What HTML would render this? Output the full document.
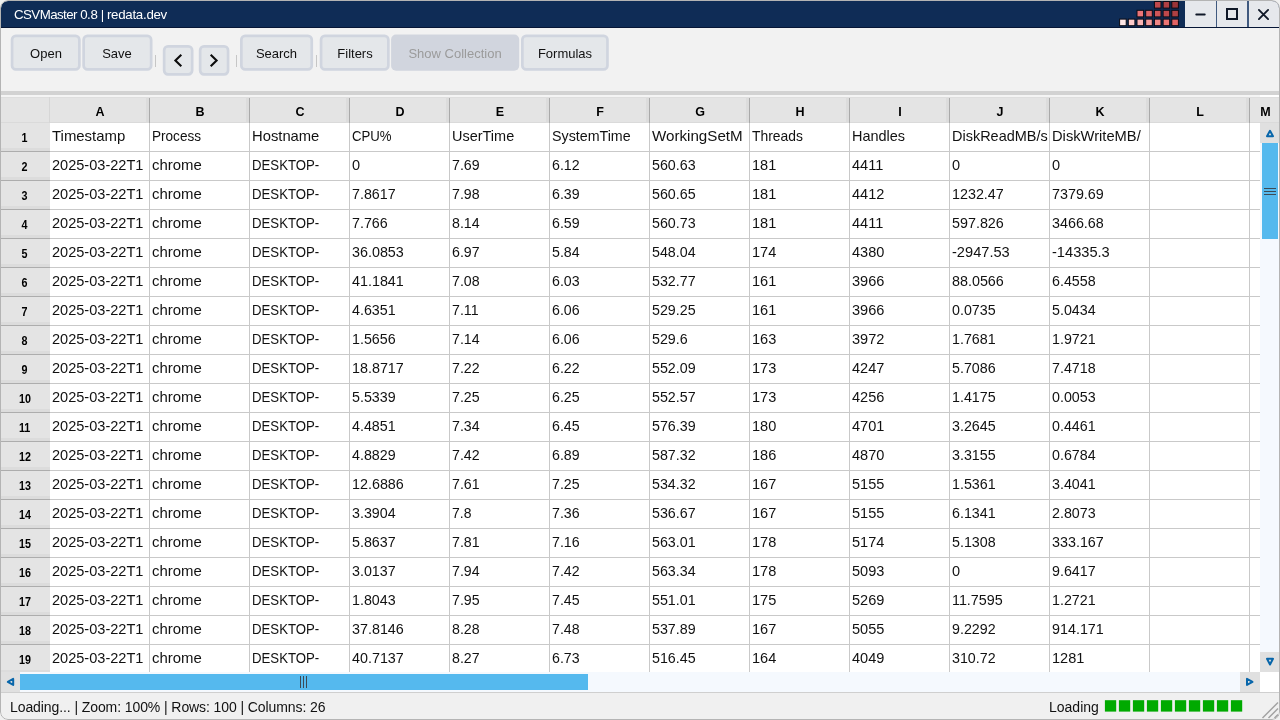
<!DOCTYPE html>
<html lang="en"><head><meta charset="utf-8"><title>CSVMaster 0.8 | redata.dev</title>
<style>
*{box-sizing:border-box;margin:0;padding:0}
html,body{width:1280px;height:720px;overflow:hidden;background:#f0f0f0}
body{font-family:"Liberation Sans",sans-serif;color:#111;position:relative}
#win{will-change:transform;position:absolute;left:0;top:0;width:1280px;height:720px;border-radius:8px;background:#f2f2f2;overflow:hidden}
#frame{position:absolute;left:0;top:0;width:1280px;height:720px;border:1px solid #b4b4b4;border-radius:8px;pointer-events:none;z-index:50}
#title{position:absolute;left:1px;top:1px;width:1278px;height:27px;background:#0f2c56;border-bottom:1px solid #061636;border-radius:7px 7px 0 0;overflow:hidden}
#title .t{position:absolute;left:13px;top:5px;font-size:13.3px;line-height:17px;color:#fff;letter-spacing:-0.42px;white-space:nowrap}
#logo{position:absolute;left:1118px;top:0px}
.wb{position:absolute;top:0;height:26px;background:#e6e8ec}
#toolbar{position:absolute;left:1px;top:28px;width:1278px;height:63px;background:#f2f2f2}
.btn{position:absolute;top:35px;height:36px;font-size:13px;line-height:37px;text-align:center;color:#111;white-space:nowrap}
.btn.dis{color:#9b9b9b}
.sep{position:absolute;top:55px;width:1px;height:12px;background:#c6c6c6}
#band1{position:absolute;left:1px;top:91px;width:1278px;height:4px;background:#d2d2d2}
#band2{position:absolute;left:1px;top:95px;width:1278px;height:2px;background:#f4f4f4}
#grid{position:absolute;left:0;top:0;width:1260px;height:672px;overflow:hidden}
#hdr{position:absolute;left:1px;top:97px;width:1279px;height:26px;background:#e4e4e4;border-bottom:1px solid #dadada;border-top:1px solid #dedede}
#hdr .corner{position:absolute;left:0;top:-1px;width:49px;height:26px;border-right:1px solid #d6d6d6}
.ch{position:absolute;top:-1px;width:100px;height:25px;font-weight:bold;font-size:12.5px;line-height:31px;text-align:center;margin-left:-1px;color:#000}
.ch::after{content:"";position:absolute;right:0;top:1px;width:4px;height:25px;background:linear-gradient(90deg,#dcdcdc 0,#dcdcdc 3px,#a9a9a9 3px)}
.ch.last{width:31px}
.ch.last::after{display:none}
.row{position:absolute;left:0;width:1280px;height:29px}
.rh{position:absolute;left:1px;top:0;width:49px;height:29px;background:#e4e4e4;font-weight:bold;font-size:12.5px;text-align:center;line-height:29px;color:#000}
.rh::after{content:"";position:absolute;left:0;bottom:0;width:49px;height:4px;background:linear-gradient(180deg,#dcdcdc 0,#dcdcdc 3px,#adadad 3px)}
.rh span{position:relative;top:1px;left:-1px;display:inline-block;transform:scaleX(.86)}
.c{position:absolute;top:0;width:100px;height:29px;background:#fff;border-right:1px solid #c9c9c9;border-bottom:1px solid #c9c9c9;font-size:15px;line-height:26px;padding-left:2px;white-space:nowrap;overflow:hidden;color:#111}
#vsb{position:absolute;left:1260px;top:123px;width:19px;height:549px;background:#f5f9fe}
.sbb{position:absolute;background:#e0e0e0}
#vthumb{position:absolute;left:2px;top:20px;width:16px;height:96px;background:#55b9ee}
#hsb{position:absolute;left:1px;top:672px;width:1259px;height:20px;background:#f5f9fe}
#hthumb{position:absolute;left:19px;top:2px;width:568px;height:16px;background:#55b9ee}
#sline{position:absolute;left:1px;top:692px;width:1278px;height:1px;background:#cfcfcf}
#status{position:absolute;left:1px;top:693px;width:1278px;height:26px;background:#f0f0f0;font-size:14px;color:#111}
#status .l{position:absolute;left:9px;top:5px;line-height:18px;letter-spacing:-0.09px;white-space:nowrap}
#status .r{position:absolute;left:1048px;top:5px;line-height:18px;white-space:nowrap}
.pb{position:absolute;top:7px;width:12px;height:12px;background:#00aa00}
svg{position:absolute;display:block;overflow:visible}
.s{display:inline-block;transform-origin:0 50%;white-space:nowrap}
.wd{position:absolute;top:0;width:3px;height:26px;background:linear-gradient(90deg,#e6e8ec 0,#e6e8ec 0.6px,#40597f 0.8px,#40597f 2.1px,#e6e8ec 2.3px)}
.wd.w2{background:linear-gradient(90deg,#40597f 0,#40597f 1.5px,#e6e8ec 1.7px)}
.k1010{transform:translateY(-0.35px) scaleX(1.01)}
.k880{transform:translateY(-0.35px) scaleX(0.88)}
.k905{transform:translateY(-0.35px) scaleX(0.905)}
.k925{transform:translateY(-0.35px) scaleX(0.925)}
.k930{transform:translateY(-0.35px) scaleX(0.93)}
.k945{transform:translateY(-0.35px) scaleX(0.945)}
.k950{transform:translateY(-0.35px) scaleX(0.95)}
.k955{transform:translateY(-0.35px) scaleX(0.955)}
.k965{transform:translateY(-0.35px) scaleX(0.965)}
.k970{transform:translateY(-0.35px) scaleX(0.97)}
.k975{transform:translateY(-0.35px) scaleX(0.975)}
.k980{transform:translateY(-0.35px) scaleX(0.98)}
.k985{transform:translateY(-0.35px) scaleX(0.985)}
.k995{transform:translateY(-0.35px) scaleX(0.995)}
</style></head>
<body>
<div id="win">
<div id="title"><div class="t"><span style="letter-spacing:-0.57px">CSVMaster</span> 0.8 | <span style="letter-spacing:-0.28px">redata.dev</span></div>
<svg id="logo" width="66" height="27" viewBox="0 0 66 27">
<g>
<rect x="35.4" y="0.5" width="6.6" height="6.6" fill="#c0484c" stroke="#0a0a14" stroke-width="1"/>
<rect x="44.1" y="0.5" width="6.6" height="6.6" fill="#b04044" stroke="#0a0a14" stroke-width="1"/>
<rect x="52.8" y="0.5" width="6.6" height="6.6" fill="#9a3438" stroke="#0a0a14" stroke-width="1"/>
<rect x="18.0" y="9.3" width="6.6" height="6.6" fill="#ec7578" stroke="#0a0a14" stroke-width="1"/>
<rect x="26.7" y="9.3" width="6.6" height="6.6" fill="#dd6366" stroke="#0a0a14" stroke-width="1"/>
<rect x="35.4" y="9.3" width="6.6" height="6.6" fill="#cf5558" stroke="#0a0a14" stroke-width="1"/>
<rect x="44.1" y="9.3" width="6.6" height="6.6" fill="#bd484b" stroke="#0a0a14" stroke-width="1"/>
<rect x="52.8" y="9.3" width="6.6" height="6.6" fill="#ae4043" stroke="#0a0a14" stroke-width="1"/>
<rect x="0.6" y="18.1" width="6.6" height="6.6" fill="#fde6e6" stroke="#0a0a14" stroke-width="1"/>
<rect x="9.3" y="18.1" width="6.6" height="6.6" fill="#fccaca" stroke="#0a0a14" stroke-width="1"/>
<rect x="18.0" y="18.1" width="6.6" height="6.6" fill="#f9b4b4" stroke="#0a0a14" stroke-width="1"/>
<rect x="26.7" y="18.1" width="6.6" height="6.6" fill="#f69c9c" stroke="#0a0a14" stroke-width="1"/>
<rect x="35.4" y="18.1" width="6.6" height="6.6" fill="#f08686" stroke="#0a0a14" stroke-width="1"/>
<rect x="44.1" y="18.1" width="6.6" height="6.6" fill="#ec7474" stroke="#0a0a14" stroke-width="1"/>
<rect x="52.8" y="18.1" width="6.6" height="6.6" fill="#e26365" stroke="#0a0a14" stroke-width="1"/>
</g>
</svg>
<div class="wb" style="left:1184px;width:95px"></div>
<div class="wd" style="left:1214px"></div>
<div class="wd w2" style="left:1246px"></div>
<svg style="left:1184px;top:0" width="95" height="26" viewBox="0 0 95 26">
<line x1="11.3" y1="13.5" x2="19.7" y2="13.5" stroke="#101828" stroke-width="2" stroke-linecap="round"/>
<rect x="42" y="8" width="10" height="10" fill="none" stroke="#101828" stroke-width="2"/>
<path d="M73.9 8.9 L83.1 18.1 M83.1 8.9 L73.9 18.1" stroke="#101828" stroke-width="1.9" stroke-linecap="round" fill="none"/>
</svg>
</div>
<div id="toolbar"></div>
<svg style="left:0;top:28px" width="640" height="63" viewBox="0 28 640 63">
<rect x="12.05" y="35.95" width="67.30" height="33.50" rx="3.8" fill="#e4e7ea" stroke="#d0d5df" stroke-width="2.7"/>
<rect x="83.65" y="35.95" width="67.50" height="33.50" rx="3.8" fill="#e4e7ea" stroke="#d0d5df" stroke-width="2.7"/>
<rect x="164.15" y="46.45" width="28.00" height="27.90" rx="3.8" fill="#e4e7ea" stroke="#d0d5df" stroke-width="2.7"/>
<rect x="200.15" y="46.45" width="27.90" height="27.90" rx="3.8" fill="#e4e7ea" stroke="#d0d5df" stroke-width="2.7"/>
<rect x="241.35" y="35.95" width="70.40" height="33.50" rx="3.8" fill="#e4e7ea" stroke="#d0d5df" stroke-width="2.7"/>
<rect x="321.05" y="35.95" width="67.30" height="33.50" rx="3.8" fill="#e4e7ea" stroke="#d0d5df" stroke-width="2.7"/>
<rect x="391.10" y="34.60" width="128.10" height="36.20" rx="5" fill="#d1d5de"/>
<rect x="522.35" y="35.95" width="85.10" height="33.50" rx="3.8" fill="#e4e7ea" stroke="#d0d5df" stroke-width="2.7"/>
</svg>
<div class="btn" style="left:11px;width:70px">Open</div>
<div class="btn" style="left:82px;width:70px">Save</div>
<div class="sep" style="left:155px"></div>
<svg style="left:160px;top:42px" width="72" height="36" viewBox="160 42 72 36"><path d="M181.3 54.7 L175.4 60.5 L181.3 66.3 M210.7 54.7 L216.6 60.5 L210.7 66.3" fill="none" stroke="#0c0c0c" stroke-width="2.1" stroke-linecap="butt" stroke-linejoin="miter"/></svg>
<div class="sep" style="left:236px"></div>
<div class="btn" style="left:240px;width:73px">Search</div>
<div class="sep" style="left:316px"></div>
<div class="btn" style="left:320px;width:70px">Filters</div>
<div class="btn dis" style="left:391px;width:128px">Show Collection</div>
<div class="btn" style="left:521px;width:88px">Formulas</div>
<div id="band1"></div><div id="band2"></div>
<div id="hdr"><div class="corner"></div><div class="ch" style="left:50px">A</div><div class="ch" style="left:150px">B</div><div class="ch" style="left:250px">C</div><div class="ch" style="left:350px">D</div><div class="ch" style="left:450px">E</div><div class="ch" style="left:550px">F</div><div class="ch" style="left:650px">G</div><div class="ch" style="left:750px">H</div><div class="ch" style="left:850px">I</div><div class="ch" style="left:950px">J</div><div class="ch" style="left:1050px">K</div><div class="ch" style="left:1150px">L</div><div class="ch last" style="left:1250px">M</div></div>
<div id="grid">
<div class="row" style="top:123px"><div class="rh"><span>1</span></div><div class="c" style="left:50px"><span class="s k995">Timestamp</span></div><div class="c" style="left:150px"><span class="s k905">Process</span></div><div class="c" style="left:250px"><span class="s k985">Hostname</span></div><div class="c" style="left:350px"><span class="s k880">CPU%</span></div><div class="c" style="left:450px"><span class="s k965">UserTime</span></div><div class="c" style="left:550px"><span class="s k950">SystemTime</span></div><div class="c" style="left:650px"><span class="s k1010">WorkingSetM</span></div><div class="c" style="left:750px"><span class="s k925">Threads</span></div><div class="c" style="left:850px"><span class="s k965">Handles</span></div><div class="c" style="left:950px"><span class="s k965">DiskReadMB/s</span></div><div class="c" style="left:1050px"><span class="s k980">DiskWriteMB/</span></div><div class="c" style="left:1150px"></div><div class="c" style="left:1250px"></div></div>
<div class="row" style="top:152px"><div class="rh"><span>2</span></div><div class="c" style="left:50px"><span class="s k970">2025-03-22T1</span></div><div class="c" style="left:150px"><span class="s k995">chrome</span></div><div class="c" style="left:250px"><span class="s k880">DESKTOP-</span></div><div class="c" style="left:350px"><span class="s k970">0</span></div><div class="c" style="left:450px"><span class="s k945">7.69</span></div><div class="c" style="left:550px"><span class="s k945">6.12</span></div><div class="c" style="left:650px"><span class="s k950">560.63</span></div><div class="c" style="left:750px"><span class="s k970">181</span></div><div class="c" style="left:850px"><span class="s k970">4411</span></div><div class="c" style="left:950px"><span class="s k970">0</span></div><div class="c" style="left:1050px"><span class="s k970">0</span></div><div class="c" style="left:1150px"></div><div class="c" style="left:1250px"></div></div>
<div class="row" style="top:181px"><div class="rh"><span>3</span></div><div class="c" style="left:50px"><span class="s k970">2025-03-22T1</span></div><div class="c" style="left:150px"><span class="s k995">chrome</span></div><div class="c" style="left:250px"><span class="s k880">DESKTOP-</span></div><div class="c" style="left:350px"><span class="s k950">7.8617</span></div><div class="c" style="left:450px"><span class="s k945">7.98</span></div><div class="c" style="left:550px"><span class="s k945">6.39</span></div><div class="c" style="left:650px"><span class="s k950">560.65</span></div><div class="c" style="left:750px"><span class="s k970">181</span></div><div class="c" style="left:850px"><span class="s k970">4412</span></div><div class="c" style="left:950px"><span class="s k955">1232.47</span></div><div class="c" style="left:1050px"><span class="s k955">7379.69</span></div><div class="c" style="left:1150px"></div><div class="c" style="left:1250px"></div></div>
<div class="row" style="top:210px"><div class="rh"><span>4</span></div><div class="c" style="left:50px"><span class="s k970">2025-03-22T1</span></div><div class="c" style="left:150px"><span class="s k995">chrome</span></div><div class="c" style="left:250px"><span class="s k880">DESKTOP-</span></div><div class="c" style="left:350px"><span class="s k950">7.766</span></div><div class="c" style="left:450px"><span class="s k945">8.14</span></div><div class="c" style="left:550px"><span class="s k945">6.59</span></div><div class="c" style="left:650px"><span class="s k950">560.73</span></div><div class="c" style="left:750px"><span class="s k970">181</span></div><div class="c" style="left:850px"><span class="s k970">4411</span></div><div class="c" style="left:950px"><span class="s k955">597.826</span></div><div class="c" style="left:1050px"><span class="s k955">3466.68</span></div><div class="c" style="left:1150px"></div><div class="c" style="left:1250px"></div></div>
<div class="row" style="top:239px"><div class="rh"><span>5</span></div><div class="c" style="left:50px"><span class="s k970">2025-03-22T1</span></div><div class="c" style="left:150px"><span class="s k995">chrome</span></div><div class="c" style="left:250px"><span class="s k880">DESKTOP-</span></div><div class="c" style="left:350px"><span class="s k955">36.0853</span></div><div class="c" style="left:450px"><span class="s k945">6.97</span></div><div class="c" style="left:550px"><span class="s k945">5.84</span></div><div class="c" style="left:650px"><span class="s k950">548.04</span></div><div class="c" style="left:750px"><span class="s k970">174</span></div><div class="c" style="left:850px"><span class="s k970">4380</span></div><div class="c" style="left:950px"><span class="s k975">-2947.53</span></div><div class="c" style="left:1050px"><span class="s k975">-14335.3</span></div><div class="c" style="left:1150px"></div><div class="c" style="left:1250px"></div></div>
<div class="row" style="top:268px"><div class="rh"><span>6</span></div><div class="c" style="left:50px"><span class="s k970">2025-03-22T1</span></div><div class="c" style="left:150px"><span class="s k995">chrome</span></div><div class="c" style="left:250px"><span class="s k880">DESKTOP-</span></div><div class="c" style="left:350px"><span class="s k955">41.1841</span></div><div class="c" style="left:450px"><span class="s k945">7.08</span></div><div class="c" style="left:550px"><span class="s k945">6.03</span></div><div class="c" style="left:650px"><span class="s k950">532.77</span></div><div class="c" style="left:750px"><span class="s k970">161</span></div><div class="c" style="left:850px"><span class="s k970">3966</span></div><div class="c" style="left:950px"><span class="s k955">88.0566</span></div><div class="c" style="left:1050px"><span class="s k950">6.4558</span></div><div class="c" style="left:1150px"></div><div class="c" style="left:1250px"></div></div>
<div class="row" style="top:297px"><div class="rh"><span>7</span></div><div class="c" style="left:50px"><span class="s k970">2025-03-22T1</span></div><div class="c" style="left:150px"><span class="s k995">chrome</span></div><div class="c" style="left:250px"><span class="s k880">DESKTOP-</span></div><div class="c" style="left:350px"><span class="s k950">4.6351</span></div><div class="c" style="left:450px"><span class="s k945">7.11</span></div><div class="c" style="left:550px"><span class="s k945">6.06</span></div><div class="c" style="left:650px"><span class="s k950">529.25</span></div><div class="c" style="left:750px"><span class="s k970">161</span></div><div class="c" style="left:850px"><span class="s k970">3966</span></div><div class="c" style="left:950px"><span class="s k950">0.0735</span></div><div class="c" style="left:1050px"><span class="s k950">5.0434</span></div><div class="c" style="left:1150px"></div><div class="c" style="left:1250px"></div></div>
<div class="row" style="top:326px"><div class="rh"><span>8</span></div><div class="c" style="left:50px"><span class="s k970">2025-03-22T1</span></div><div class="c" style="left:150px"><span class="s k995">chrome</span></div><div class="c" style="left:250px"><span class="s k880">DESKTOP-</span></div><div class="c" style="left:350px"><span class="s k950">1.5656</span></div><div class="c" style="left:450px"><span class="s k945">7.14</span></div><div class="c" style="left:550px"><span class="s k945">6.06</span></div><div class="c" style="left:650px"><span class="s k950">529.6</span></div><div class="c" style="left:750px"><span class="s k970">163</span></div><div class="c" style="left:850px"><span class="s k970">3972</span></div><div class="c" style="left:950px"><span class="s k950">1.7681</span></div><div class="c" style="left:1050px"><span class="s k950">1.9721</span></div><div class="c" style="left:1150px"></div><div class="c" style="left:1250px"></div></div>
<div class="row" style="top:355px"><div class="rh"><span>9</span></div><div class="c" style="left:50px"><span class="s k970">2025-03-22T1</span></div><div class="c" style="left:150px"><span class="s k995">chrome</span></div><div class="c" style="left:250px"><span class="s k880">DESKTOP-</span></div><div class="c" style="left:350px"><span class="s k955">18.8717</span></div><div class="c" style="left:450px"><span class="s k945">7.22</span></div><div class="c" style="left:550px"><span class="s k945">6.22</span></div><div class="c" style="left:650px"><span class="s k950">552.09</span></div><div class="c" style="left:750px"><span class="s k970">173</span></div><div class="c" style="left:850px"><span class="s k970">4247</span></div><div class="c" style="left:950px"><span class="s k950">5.7086</span></div><div class="c" style="left:1050px"><span class="s k950">7.4718</span></div><div class="c" style="left:1150px"></div><div class="c" style="left:1250px"></div></div>
<div class="row" style="top:384px"><div class="rh"><span>10</span></div><div class="c" style="left:50px"><span class="s k970">2025-03-22T1</span></div><div class="c" style="left:150px"><span class="s k995">chrome</span></div><div class="c" style="left:250px"><span class="s k880">DESKTOP-</span></div><div class="c" style="left:350px"><span class="s k950">5.5339</span></div><div class="c" style="left:450px"><span class="s k945">7.25</span></div><div class="c" style="left:550px"><span class="s k945">6.25</span></div><div class="c" style="left:650px"><span class="s k950">552.57</span></div><div class="c" style="left:750px"><span class="s k970">173</span></div><div class="c" style="left:850px"><span class="s k970">4256</span></div><div class="c" style="left:950px"><span class="s k950">1.4175</span></div><div class="c" style="left:1050px"><span class="s k950">0.0053</span></div><div class="c" style="left:1150px"></div><div class="c" style="left:1250px"></div></div>
<div class="row" style="top:413px"><div class="rh"><span>11</span></div><div class="c" style="left:50px"><span class="s k970">2025-03-22T1</span></div><div class="c" style="left:150px"><span class="s k995">chrome</span></div><div class="c" style="left:250px"><span class="s k880">DESKTOP-</span></div><div class="c" style="left:350px"><span class="s k950">4.4851</span></div><div class="c" style="left:450px"><span class="s k945">7.34</span></div><div class="c" style="left:550px"><span class="s k945">6.45</span></div><div class="c" style="left:650px"><span class="s k950">576.39</span></div><div class="c" style="left:750px"><span class="s k970">180</span></div><div class="c" style="left:850px"><span class="s k970">4701</span></div><div class="c" style="left:950px"><span class="s k950">3.2645</span></div><div class="c" style="left:1050px"><span class="s k950">0.4461</span></div><div class="c" style="left:1150px"></div><div class="c" style="left:1250px"></div></div>
<div class="row" style="top:442px"><div class="rh"><span>12</span></div><div class="c" style="left:50px"><span class="s k970">2025-03-22T1</span></div><div class="c" style="left:150px"><span class="s k995">chrome</span></div><div class="c" style="left:250px"><span class="s k880">DESKTOP-</span></div><div class="c" style="left:350px"><span class="s k950">4.8829</span></div><div class="c" style="left:450px"><span class="s k945">7.42</span></div><div class="c" style="left:550px"><span class="s k945">6.89</span></div><div class="c" style="left:650px"><span class="s k950">587.32</span></div><div class="c" style="left:750px"><span class="s k970">186</span></div><div class="c" style="left:850px"><span class="s k970">4870</span></div><div class="c" style="left:950px"><span class="s k950">3.3155</span></div><div class="c" style="left:1050px"><span class="s k950">0.6784</span></div><div class="c" style="left:1150px"></div><div class="c" style="left:1250px"></div></div>
<div class="row" style="top:471px"><div class="rh"><span>13</span></div><div class="c" style="left:50px"><span class="s k970">2025-03-22T1</span></div><div class="c" style="left:150px"><span class="s k995">chrome</span></div><div class="c" style="left:250px"><span class="s k880">DESKTOP-</span></div><div class="c" style="left:350px"><span class="s k955">12.6886</span></div><div class="c" style="left:450px"><span class="s k945">7.61</span></div><div class="c" style="left:550px"><span class="s k945">7.25</span></div><div class="c" style="left:650px"><span class="s k950">534.32</span></div><div class="c" style="left:750px"><span class="s k970">167</span></div><div class="c" style="left:850px"><span class="s k970">5155</span></div><div class="c" style="left:950px"><span class="s k950">1.5361</span></div><div class="c" style="left:1050px"><span class="s k950">3.4041</span></div><div class="c" style="left:1150px"></div><div class="c" style="left:1250px"></div></div>
<div class="row" style="top:500px"><div class="rh"><span>14</span></div><div class="c" style="left:50px"><span class="s k970">2025-03-22T1</span></div><div class="c" style="left:150px"><span class="s k995">chrome</span></div><div class="c" style="left:250px"><span class="s k880">DESKTOP-</span></div><div class="c" style="left:350px"><span class="s k950">3.3904</span></div><div class="c" style="left:450px"><span class="s k930">7.8</span></div><div class="c" style="left:550px"><span class="s k945">7.36</span></div><div class="c" style="left:650px"><span class="s k950">536.67</span></div><div class="c" style="left:750px"><span class="s k970">167</span></div><div class="c" style="left:850px"><span class="s k970">5155</span></div><div class="c" style="left:950px"><span class="s k950">6.1341</span></div><div class="c" style="left:1050px"><span class="s k950">2.8073</span></div><div class="c" style="left:1150px"></div><div class="c" style="left:1250px"></div></div>
<div class="row" style="top:529px"><div class="rh"><span>15</span></div><div class="c" style="left:50px"><span class="s k970">2025-03-22T1</span></div><div class="c" style="left:150px"><span class="s k995">chrome</span></div><div class="c" style="left:250px"><span class="s k880">DESKTOP-</span></div><div class="c" style="left:350px"><span class="s k950">5.8637</span></div><div class="c" style="left:450px"><span class="s k945">7.81</span></div><div class="c" style="left:550px"><span class="s k945">7.16</span></div><div class="c" style="left:650px"><span class="s k950">563.01</span></div><div class="c" style="left:750px"><span class="s k970">178</span></div><div class="c" style="left:850px"><span class="s k970">5174</span></div><div class="c" style="left:950px"><span class="s k950">5.1308</span></div><div class="c" style="left:1050px"><span class="s k955">333.167</span></div><div class="c" style="left:1150px"></div><div class="c" style="left:1250px"></div></div>
<div class="row" style="top:558px"><div class="rh"><span>16</span></div><div class="c" style="left:50px"><span class="s k970">2025-03-22T1</span></div><div class="c" style="left:150px"><span class="s k995">chrome</span></div><div class="c" style="left:250px"><span class="s k880">DESKTOP-</span></div><div class="c" style="left:350px"><span class="s k950">3.0137</span></div><div class="c" style="left:450px"><span class="s k945">7.94</span></div><div class="c" style="left:550px"><span class="s k945">7.42</span></div><div class="c" style="left:650px"><span class="s k950">563.34</span></div><div class="c" style="left:750px"><span class="s k970">178</span></div><div class="c" style="left:850px"><span class="s k970">5093</span></div><div class="c" style="left:950px"><span class="s k970">0</span></div><div class="c" style="left:1050px"><span class="s k950">9.6417</span></div><div class="c" style="left:1150px"></div><div class="c" style="left:1250px"></div></div>
<div class="row" style="top:587px"><div class="rh"><span>17</span></div><div class="c" style="left:50px"><span class="s k970">2025-03-22T1</span></div><div class="c" style="left:150px"><span class="s k995">chrome</span></div><div class="c" style="left:250px"><span class="s k880">DESKTOP-</span></div><div class="c" style="left:350px"><span class="s k950">1.8043</span></div><div class="c" style="left:450px"><span class="s k945">7.95</span></div><div class="c" style="left:550px"><span class="s k945">7.45</span></div><div class="c" style="left:650px"><span class="s k950">551.01</span></div><div class="c" style="left:750px"><span class="s k970">175</span></div><div class="c" style="left:850px"><span class="s k970">5269</span></div><div class="c" style="left:950px"><span class="s k955">11.7595</span></div><div class="c" style="left:1050px"><span class="s k950">1.2721</span></div><div class="c" style="left:1150px"></div><div class="c" style="left:1250px"></div></div>
<div class="row" style="top:616px"><div class="rh"><span>18</span></div><div class="c" style="left:50px"><span class="s k970">2025-03-22T1</span></div><div class="c" style="left:150px"><span class="s k995">chrome</span></div><div class="c" style="left:250px"><span class="s k880">DESKTOP-</span></div><div class="c" style="left:350px"><span class="s k955">37.8146</span></div><div class="c" style="left:450px"><span class="s k945">8.28</span></div><div class="c" style="left:550px"><span class="s k945">7.48</span></div><div class="c" style="left:650px"><span class="s k950">537.89</span></div><div class="c" style="left:750px"><span class="s k970">167</span></div><div class="c" style="left:850px"><span class="s k970">5055</span></div><div class="c" style="left:950px"><span class="s k950">9.2292</span></div><div class="c" style="left:1050px"><span class="s k955">914.171</span></div><div class="c" style="left:1150px"></div><div class="c" style="left:1250px"></div></div>
<div class="row" style="top:645px"><div class="rh"><span>19</span></div><div class="c" style="left:50px"><span class="s k970">2025-03-22T1</span></div><div class="c" style="left:150px"><span class="s k995">chrome</span></div><div class="c" style="left:250px"><span class="s k880">DESKTOP-</span></div><div class="c" style="left:350px"><span class="s k955">40.7137</span></div><div class="c" style="left:450px"><span class="s k945">8.27</span></div><div class="c" style="left:550px"><span class="s k945">6.73</span></div><div class="c" style="left:650px"><span class="s k950">516.45</span></div><div class="c" style="left:750px"><span class="s k970">164</span></div><div class="c" style="left:850px"><span class="s k970">4049</span></div><div class="c" style="left:950px"><span class="s k950">310.72</span></div><div class="c" style="left:1050px"><span class="s k970">1281</span></div><div class="c" style="left:1150px"></div><div class="c" style="left:1250px"></div></div>
</div>
<div style="position:absolute;left:1260px;top:95px;width:19px;height:2px;background:#fff"></div>
<div id="vsb">
<div class="sbb" style="left:0;top:0;width:19px;height:20px"><svg style="left:0;top:0" width="19" height="20" viewBox="0 0 19 20"><path d="M10 7.8 L13 13.2 L7 13.2 Z" fill="#e0e0e0" stroke="#0866aa" stroke-width="2" stroke-linejoin="round"/></svg></div>
<div id="vthumb"><svg style="left:0;top:0" width="16" height="96" viewBox="0 0 16 96"><path d="M2 45.5H14M2 48.5H14M2 51.5H14" stroke="#3c4a55" stroke-width="1" fill="none"/></svg></div>
<div class="sbb" style="left:0;top:529px;width:19px;height:20px"><svg style="left:0;top:0" width="19" height="20" viewBox="0 0 19 20"><path d="M10 12.5 L13 6.8 L7 6.8 Z" fill="#e0e0e0" stroke="#0866aa" stroke-width="2" stroke-linejoin="round"/></svg></div>
</div>
<div id="hsb">
<div class="sbb" style="left:0;top:0;width:19px;height:20px"><svg style="left:0;top:0" width="19" height="20" viewBox="0 0 19 20"><path d="M6.8 9.9 L12.2 6.9 L12.2 12.9 Z" fill="#e0e0e0" stroke="#0866aa" stroke-width="2" stroke-linejoin="round"/></svg></div>
<div id="hthumb"><svg style="left:0;top:0" width="568" height="16" viewBox="0 0 568 16"><path d="M280.5 2V14M283.5 2V14M286.5 2V14" stroke="#3c4a55" stroke-width="1" fill="none"/></svg></div>
<div class="sbb" style="left:1239px;top:0;width:20px;height:20px"><svg style="left:0;top:0" width="20" height="20" viewBox="0 0 20 20"><path d="M12.5 9.9 L7 6.8 L7 12.9 Z" fill="#e0e0e0" stroke="#0866aa" stroke-width="2" stroke-linejoin="round"/></svg></div>
</div>
<div style="position:absolute;left:1260px;top:672px;width:19px;height:20px;background:#fff"></div>
<div id="sline"></div>
<div id="status"><div class="l">Loading... | Zoom: 100% | Rows: 100 | Columns: 26</div><div class="r">Loading</div>
<svg style="left:1100px;top:0" width="150" height="26" viewBox="1101 693 150 26"><rect x="1104.9" y="700.2" width="11.3" height="11.4" fill="#00aa00"/><rect x="1118.9" y="700.2" width="11.3" height="11.4" fill="#00aa00"/><rect x="1132.9" y="700.2" width="11.3" height="11.4" fill="#00aa00"/><rect x="1146.9" y="700.2" width="11.3" height="11.4" fill="#00aa00"/><rect x="1160.9" y="700.2" width="11.3" height="11.4" fill="#00aa00"/><rect x="1174.9" y="700.2" width="11.3" height="11.4" fill="#00aa00"/><rect x="1188.9" y="700.2" width="11.3" height="11.4" fill="#00aa00"/><rect x="1202.9" y="700.2" width="11.3" height="11.4" fill="#00aa00"/><rect x="1216.9" y="700.2" width="11.3" height="11.4" fill="#00aa00"/><rect x="1230.9" y="700.2" width="11.3" height="11.4" fill="#00aa00"/></svg>
<svg style="left:1259px;top:8px" width="19" height="18" viewBox="0 0 19 18"><path d="M2.5 17 L18 1.5 M8.5 17 L18 7.5 M14.5 17 L18 13.5" stroke="#a2a2a2" stroke-width="1.5" fill="none"/></svg>
</div>
<div id="frame"></div>
</div>
</body></html>
